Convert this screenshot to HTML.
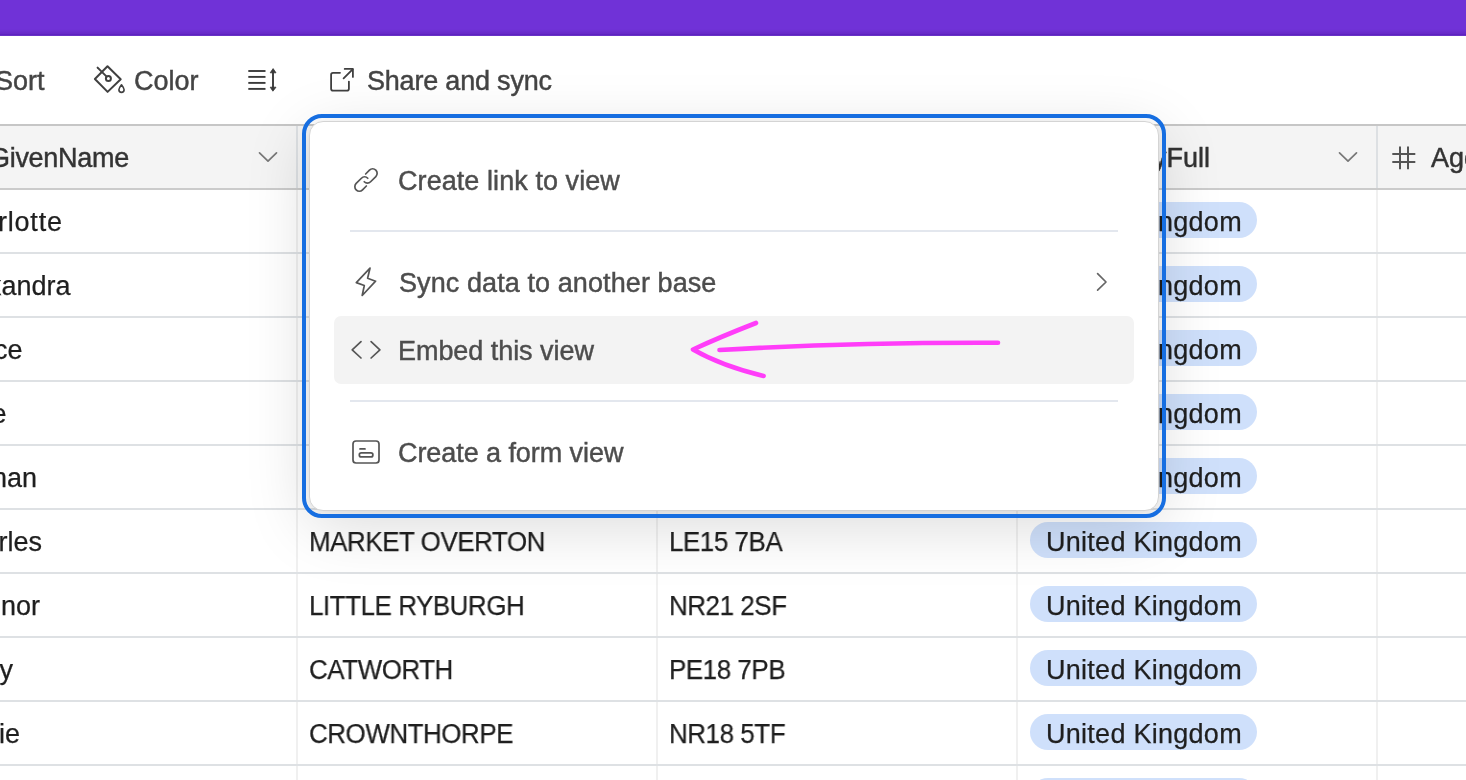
<!DOCTYPE html><html><head><meta charset="utf-8"><style>
*{margin:0;padding:0;box-sizing:border-box}
html,body{width:1466px;height:780px;overflow:hidden;background:#fff}
body{position:relative;font-family:"Liberation Sans",sans-serif;-webkit-font-smoothing:antialiased}
.a{position:absolute}
.t{position:absolute;white-space:nowrap;will-change:transform;-webkit-text-stroke:0.45px currentColor;font-size:27px;line-height:32px;height:32px}
.tb{color:#444}
.hd{color:#333}
.cell{color:#1f1f1f;-webkit-text-stroke:0.25px #1f1f1f}
.up{letter-spacing:-0.45px;transform:scaleX(0.96);transform-origin:0 0}
.mn{color:#4d4d4d}
.pill{position:absolute;height:36px;border-radius:18px;background:#cfe0fb;left:1030px;width:227px}
svg.ic{position:absolute;left:0;top:0;overflow:visible}
</style></head><body>
<div class="a" style="left:0;top:0;width:1466px;height:36px;background:linear-gradient(to bottom,#7032d7 0,#7032d7 29px,#6629c6 34px,#561bbb 35px,#7a4ad0 36px)"></div>
<div class="t tb" style="right:1421px;top:65px">Sort</div>
<div class="t tb" style="left:133.5px;top:65px">Color</div>
<div class="t tb" style="left:366.5px;top:65px;letter-spacing:-0.2px">Share and sync</div>
<div class="a" style="left:0;top:124px;width:1466px;height:2px;background:#c6c6c6"></div>
<div class="a" style="left:0;top:126px;width:1466px;height:62px;background:#f4f4f4"></div>
<div class="a" style="left:0;top:188px;width:1466px;height:2px;background:#cbcbcb"></div>
<div class="a" style="left:296px;top:126px;width:2px;height:62px;background:#dde0e3"></div>
<div class="a" style="left:296px;top:190px;width:2px;height:590px;background:#f0f0f0"></div>
<div class="a" style="left:656px;top:126px;width:2px;height:62px;background:#dde0e3"></div>
<div class="a" style="left:656px;top:190px;width:2px;height:590px;background:#f0f0f0"></div>
<div class="a" style="left:1016px;top:126px;width:2px;height:62px;background:#dde0e3"></div>
<div class="a" style="left:1016px;top:190px;width:2px;height:590px;background:#f0f0f0"></div>
<div class="a" style="left:1376px;top:126px;width:2px;height:62px;background:#dde0e3"></div>
<div class="a" style="left:1376px;top:190px;width:2px;height:590px;background:#f0f0f0"></div>
<div class="a" style="left:0;top:252px;width:1466px;height:2px;background:#dee1e4"></div>
<div class="a" style="left:0;top:316px;width:1466px;height:2px;background:#dee1e4"></div>
<div class="a" style="left:0;top:380px;width:1466px;height:2px;background:#dee1e4"></div>
<div class="a" style="left:0;top:444px;width:1466px;height:2px;background:#dee1e4"></div>
<div class="a" style="left:0;top:508px;width:1466px;height:2px;background:#dee1e4"></div>
<div class="a" style="left:0;top:572px;width:1466px;height:2px;background:#dee1e4"></div>
<div class="a" style="left:0;top:636px;width:1466px;height:2px;background:#dee1e4"></div>
<div class="a" style="left:0;top:700px;width:1466px;height:2px;background:#dee1e4"></div>
<div class="a" style="left:0;top:764px;width:1466px;height:2px;background:#dee1e4"></div>
<div class="t hd" style="right:1336.7px;top:142px;letter-spacing:-0.3px">GivenName</div>
<div class="t hd" style="left:311px;top:142px">City</div>
<div class="t hd" style="left:671px;top:142px">Postcode</div>
<div class="t hd" style="right:256px;top:142px">CountryFull</div>
<div class="t hd" style="left:1431px;top:142px">Age</div>
<div class="t cell" style="right:1402.9px;top:206px;letter-spacing:0.8px">Charlotte</div>
<div class="t cell up" style="left:309.3px;top:206px">LONG SUTTON</div>
<div class="t cell up" style="left:669.3px;top:206px">PE12 9AB</div>
<div class="pill" style="top:202px"></div>
<div class="t cell" style="left:1046px;top:206px;letter-spacing:0.27px">United Kingdom</div>
<div class="t cell" style="right:1395.8px;top:270px;letter-spacing:0px">Alexandra</div>
<div class="t cell up" style="left:309.3px;top:270px">GREAT MISSENDEN</div>
<div class="t cell up" style="left:669.3px;top:270px">HP16 0AX</div>
<div class="pill" style="top:266px"></div>
<div class="t cell" style="left:1046px;top:270px;letter-spacing:0.27px">United Kingdom</div>
<div class="t cell" style="right:1443.8px;top:334px;letter-spacing:0px">Grace</div>
<div class="t cell up" style="left:309.3px;top:334px">LOWER ASHTON</div>
<div class="t cell up" style="left:669.3px;top:334px">EX6 7QR</div>
<div class="pill" style="top:330px"></div>
<div class="t cell" style="left:1046px;top:334px;letter-spacing:0.27px">United Kingdom</div>
<div class="t cell" style="right:1459.9px;top:398px;letter-spacing:0px">Jade</div>
<div class="t cell up" style="left:309.3px;top:398px">HIGH WYCOMBE</div>
<div class="t cell up" style="left:669.3px;top:398px">HP11 2LN</div>
<div class="pill" style="top:394px"></div>
<div class="t cell" style="left:1046px;top:398px;letter-spacing:0.27px">United Kingdom</div>
<div class="t cell" style="right:1428.7px;top:462px;letter-spacing:0px">Nathan</div>
<div class="t cell up" style="left:309.3px;top:462px">WEST ACRE</div>
<div class="t cell up" style="left:669.3px;top:462px">PE32 1TX</div>
<div class="pill" style="top:458px"></div>
<div class="t cell" style="left:1046px;top:462px;letter-spacing:0.27px">United Kingdom</div>
<div class="t cell" style="right:1424px;top:526px;letter-spacing:0px">Charles</div>
<div class="t cell up" style="left:309.3px;top:526px">MARKET OVERTON</div>
<div class="t cell up" style="left:669.3px;top:526px">LE15 7BA</div>
<div class="pill" style="top:522px"></div>
<div class="t cell" style="left:1046px;top:526px;letter-spacing:0.27px">United Kingdom</div>
<div class="t cell" style="right:1425.6px;top:590px;letter-spacing:0px">nor</div>
<div class="t cell up" style="left:309.3px;top:590px">LITTLE RYBURGH</div>
<div class="t cell up" style="left:669.3px;top:590px">NR21 2SF</div>
<div class="pill" style="top:586px"></div>
<div class="t cell" style="left:1046px;top:590px;letter-spacing:0.27px">United Kingdom</div>
<div class="t cell" style="right:1453.1px;top:654px;letter-spacing:0px">Amy</div>
<div class="t cell up" style="left:309.3px;top:654px">CATWORTH</div>
<div class="t cell up" style="left:669.3px;top:654px">PE18 7PB</div>
<div class="pill" style="top:650px"></div>
<div class="t cell" style="left:1046px;top:654px;letter-spacing:0.27px">United Kingdom</div>
<div class="t cell" style="right:1445.8px;top:718px;letter-spacing:0px">Ellie</div>
<div class="t cell up" style="left:309.3px;top:718px">CROWNTHORPE</div>
<div class="t cell up" style="left:669.3px;top:718px">NR18 5TF</div>
<div class="pill" style="top:714px"></div>
<div class="t cell" style="left:1046px;top:718px;letter-spacing:0.27px">United Kingdom</div>
<div class="t cell" style="right:1435px;top:782px;letter-spacing:0px">Rosie</div>
<div class="t cell up" style="left:309.3px;top:782px">HOLT</div>
<div class="t cell up" style="left:669.3px;top:782px">NR25 6BN</div>
<div class="pill" style="top:778px"></div>
<div class="t cell" style="left:1046px;top:782px;letter-spacing:0.27px">United Kingdom</div>
<svg class="ic" width="1466" height="780"><g fill="none" stroke="#404040" stroke-width="2" stroke-linecap="round" stroke-linejoin="round"><path d="M94.9 79 L107.5 66.2 L120.7 79.2 L107.6 91.9 Z"/><path d="M97.6 67.6 L106.4 76.4"/><circle cx="108.4" cy="78.4" r="2.5"/><path d="M121.5 84.8 C119.8 87 118.9 88.6 118.9 89.8 A2.6 2.6 0 0 0 124.1 89.8 C124.1 88.6 123.2 87 121.5 84.8 Z" stroke-width="1.6"/></g><g stroke="#3a3a3a" stroke-width="1.9" fill="none"><path d="M248.3 71 H265.5"/><path d="M248.3 76.9 H265.5"/><path d="M248.3 82.9 H265.5"/><path d="M248.3 88.9 H265.5"/><path d="M273 71.5 V88.5"/></g><path d="M273.1 68.6 L276 72.8 L270.2 72.8 Z M272.9 91.2 L276 87.2 L270.2 87.2 Z" fill="#3a3a3a" stroke="#3a3a3a" stroke-width="0.8" stroke-linejoin="round"/><g fill="none" stroke="#404040" stroke-width="1.8" stroke-linecap="round" stroke-linejoin="round"><path d="M340 72.8 H333 Q331.1 72.8 331.1 74.7 V88.8 Q331.1 90.7 333 90.7 H347 Q348.9 90.7 348.9 88.8 V81.6"/><path d="M343.6 78.4 L352.6 69.4"/><path d="M344.7 68.9 H352.9 V76.9"/></g><g fill="none" stroke="#777" stroke-width="1.7" stroke-linecap="round" stroke-linejoin="round"><path d="M259.5 152.8 L268 161.2 L276.5 152.8"/><path d="M1339.5 152.8 L1348 161.2 L1356.5 152.8"/></g><g fill="none" stroke="#555" stroke-width="2"><path d="M1400 146.5 V169.3 M1408 146.5 V169.3 M1392.3 154 H1415.3 M1392.3 162 H1415.3"/></g></svg>
<div class="a" style="left:309px;top:121px;width:850px;height:390px;background:#fff;border:1px solid #d4d4d4;border-radius:14px;box-shadow:0 14px 64px rgba(0,0,0,.15),0 2px 8px rgba(0,0,0,.06)"></div>
<div class="a" style="left:334px;top:316px;width:800px;height:68px;background:#f3f3f3;border-radius:7px"></div>
<div class="a" style="left:350px;top:230px;width:768px;height:2px;background:#e3e7ee"></div>
<div class="a" style="left:350px;top:400px;width:768px;height:2px;background:#e3e7ee"></div>
<div class="t mn" style="left:398px;top:165px;letter-spacing:0.07px">Create link to view</div>
<div class="t mn" style="left:398.5px;top:267px;letter-spacing:0.09px">Sync data to another base</div>
<div class="t mn" style="left:397.6px;top:335px;letter-spacing:-0.05px">Embed this view</div>
<div class="t mn" style="left:397.7px;top:437px;letter-spacing:-0.07px">Create a form view</div>
<svg class="ic" width="1466" height="780"><g fill="none" stroke="#555" stroke-width="1.7" stroke-linecap="round" stroke-linejoin="round"><g transform="translate(366 180) rotate(-45)"><path d="M4 -4.5 H9.4 A4.5 4.5 0 0 1 9.4 4.5 H2 A4.5 4.5 0 0 1 -2.5 0"/><path d="M-4 4.5 H-9.4 A4.5 4.5 0 0 1 -9.4 -4.5 H-2 A4.5 4.5 0 0 1 2.5 0"/></g><path d="M370 268.2 L356.3 282.6 L364.3 285.5 L362.2 295.5 L375.6 281.2 L367.6 278.3 Z"/><path d="M361 341.6 L352.2 349.8 L361 358"/><path d="M371.1 341.6 L379.9 349.8 L371.1 358"/><rect x="353" y="441" width="26" height="22" rx="3"/><path d="M360 448.9 H365"/><rect x="359.3" y="452.9" width="13.6" height="4" rx="2"/><path d="M1097.6 273.6 L1106 282 L1097.6 290.2" stroke="#666"/></g></svg>
<div class="a" style="left:302px;top:114px;width:864px;height:404px;border:4px solid #166ee1;border-radius:20px"></div>
<svg class="ic" width="1466" height="780"><g fill="none" stroke="#ff3df9" stroke-width="4.6" stroke-linecap="round" stroke-linejoin="round"><path d="M719.5 350 C800 345.2 880 342.4 998 342.8"/><path d="M756 323 Q720 337 693 349.5 Q722 366 763.6 376"/></g></svg>
</body></html>
